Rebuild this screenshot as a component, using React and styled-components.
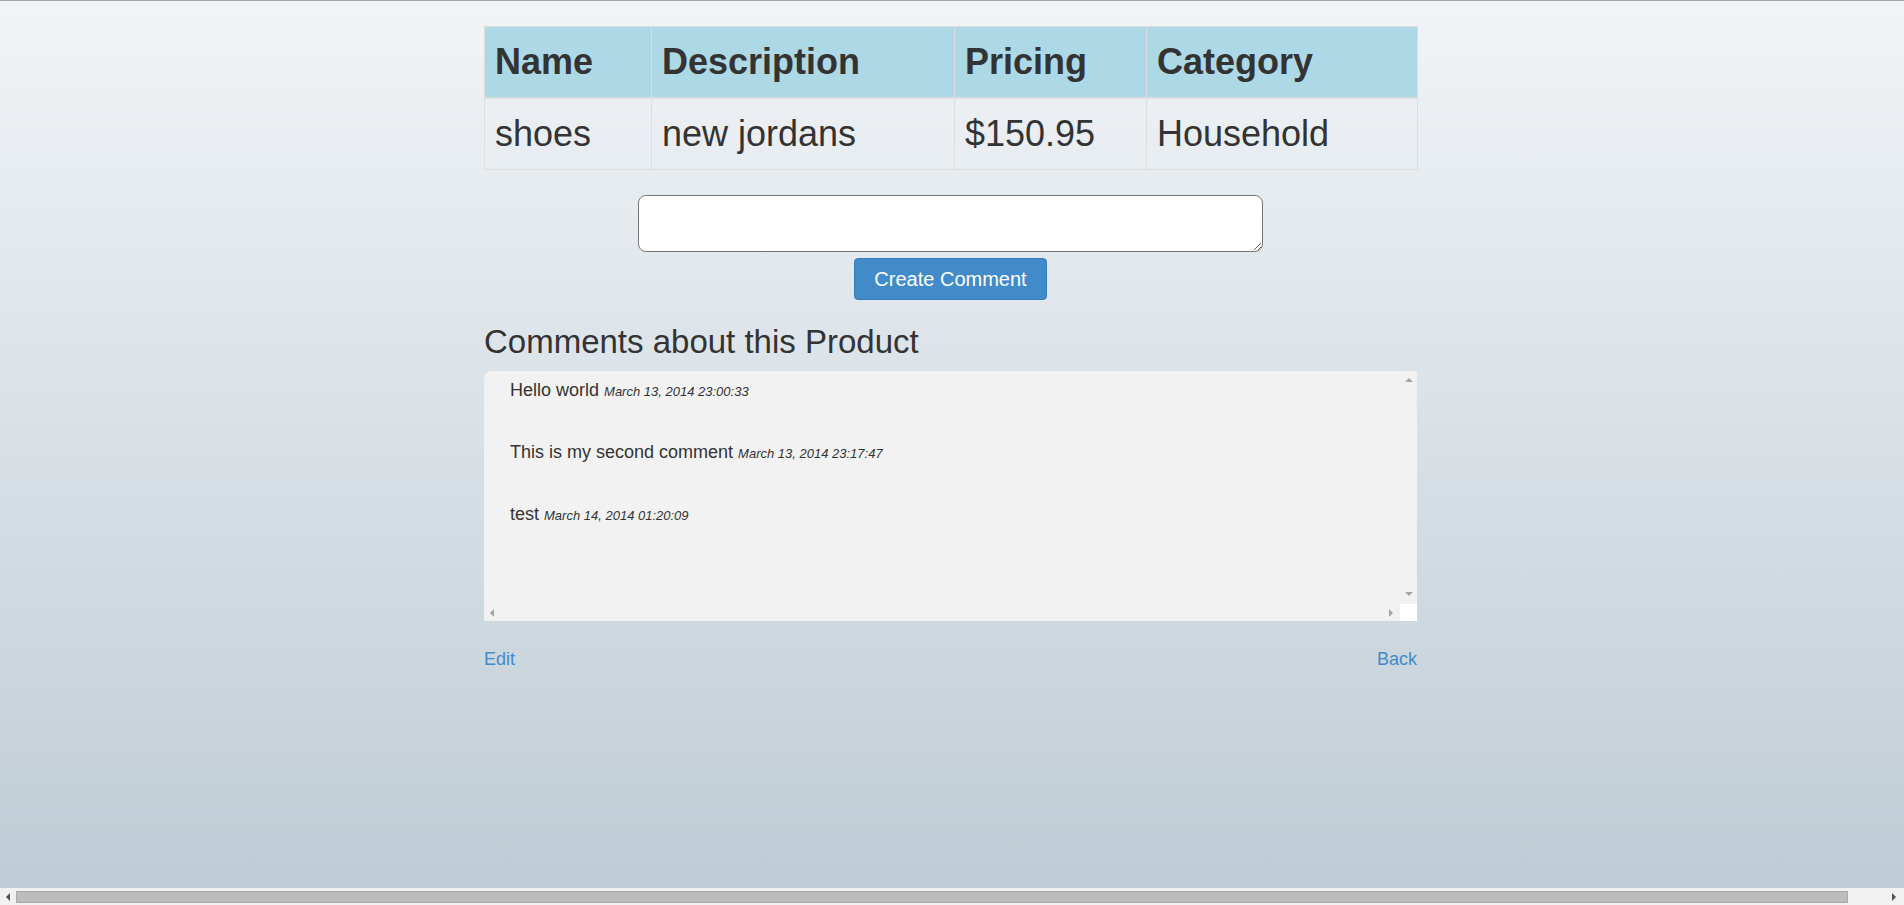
import React from "react";
import styled, { createGlobalStyle, css } from "styled-components";

const GlobalStyle = createGlobalStyle`
  html {
    height: 100%;
    background: linear-gradient(to bottom, #f1f4f7 0px, #bfccd5 888px) no-repeat;
    background-color: #bfccd5;
  }
  body {
    margin: 0;
    border-top: 1px solid #a6a6a6;
    font-family: "Liberation Sans", Arial, sans-serif;
    color: #333;
  }
`;

const Page = styled.div`
  padding-top: 25px;
`;

const Container = styled.div`
  width: 933px;
  margin-left: calc(50vw - 468px);
`;

const ProductTable = styled.table`
  width: 100%;
  table-layout: fixed;
  border-collapse: collapse;
  border: 1px solid #ddd;
  font-size: 36px;
  line-height: 54px;
`;

const HeadCell = styled.th`
  box-sizing: border-box;
  background: #add8e6;
  text-align: left;
  font-weight: bold;
  padding: 8px 8px 8px 10px;
  border: 1px solid #ddd;
  border-bottom-width: 2px;
  width: ${(p) => p.$w}px;
  white-space: nowrap;
`;

const Cell = styled.td`
  padding: 8px 8px 8px 10px;
  border: 1px solid #ddd;
  white-space: nowrap;
`;

const CommentForm = styled.form`
  display: flex;
  flex-direction: column;
  align-items: center;
  gap: 6px;
  margin-top: 25px;
`;

const CommentInput = styled.textarea`
  box-sizing: border-box;
  width: 625px;
  height: 57px;
  border: 1px solid #767676;
  border-radius: 8px;
  background: #fff;
  font-family: "Liberation Sans", Arial, sans-serif;
  font-size: 16px;
`;

const PrimaryButton = styled.button`
  box-sizing: border-box;
  height: 42px;
  padding: 6px 19px;
  background: #428bca;
  border: 1px solid #357ebd;
  border-radius: 4px;
  color: #fff;
  font-family: "Liberation Sans", Arial, sans-serif;
  font-size: 20px;
  line-height: 28px;
`;

const SectionTitle = styled.h2`
  margin: 24px 0 11px;
  font-size: 33px;
  font-weight: normal;
  line-height: 36px;
  color: #333;
`;

const CommentsBox = styled.div`
  height: 250px;
  display: grid;
  grid-template-columns: 1fr 17px;
  grid-template-rows: 1fr 17px;
  background: #f2f2f2;
  border-top-left-radius: 8px;
  overflow: hidden;
`;

const CommentList = styled.ul`
  list-style: none;
  margin: 0;
  padding: 7px 26px 0;
  overflow: hidden;
`;

const CommentItem = styled.li`
  font-size: 18px;
  line-height: 24px;
  margin-bottom: 38px;
  white-space: nowrap;
`;

const CommentDate = styled.em`
  font-size: 13px;
  line-height: 1;
`;

const VScrollbar = styled.div`
  display: flex;
  flex-direction: column;
  justify-content: space-between;
  align-items: center;
  padding: 7px 0 8px;
  background: #f1f1f1;
`;

const HScrollbar = styled.div`
  display: flex;
  justify-content: space-between;
  align-items: center;
  padding: 0 7px 0 6px;
  background: #f1f1f1;
`;

const ScrollCorner = styled.div`
  background: #fff;
`;

const arrowShapes = {
  up: css`
    border-left: 4px solid transparent;
    border-right: 4px solid transparent;
    border-bottom: 4px solid var(--arrow);
  `,
  down: css`
    border-left: 4px solid transparent;
    border-right: 4px solid transparent;
    border-top: 4px solid var(--arrow);
  `,
  left: css`
    border-top: 4px solid transparent;
    border-bottom: 4px solid transparent;
    border-right: 4px solid var(--arrow);
  `,
  right: css`
    border-top: 4px solid transparent;
    border-bottom: 4px solid transparent;
    border-left: 4px solid var(--arrow);
  `,
};

const Arrow = styled.span`
  --arrow: ${(p) => p.$color || "#a3a3a3"};
  display: block;
  width: 0;
  height: 0;
  ${(p) => arrowShapes[p.$dir]}
`;

const Footer = styled.div`
  display: flex;
  justify-content: space-between;
  margin-top: 26px;
`;

const NavLink = styled.a`
  color: #428bca;
  font-size: 18px;
  line-height: 24px;
  text-decoration: none;
`;

const WindowScrollbar = styled.div`
  position: fixed;
  left: 0;
  right: 0;
  bottom: 0;
  height: 17px;
  display: flex;
  align-items: center;
  background: #f1f1f1;
`;

const ScrollButton = styled.div`
  box-sizing: border-box;
  width: ${(p) => p.$w}px;
  height: 17px;
  display: flex;
  align-items: center;
  justify-content: center;
  padding-right: ${(p) => p.$pr || 0}px;
`;

const ScrollThumb = styled.div`
  box-sizing: border-box;
  width: 1832px;
  height: 12px;
  background: #bcbcbc;
  border: 1px solid #a9a9a9;
`;

const ScrollTrack = styled.div`
  flex: 1;
`;

const columns = [
  { label: "Name", w: 167 },
  { label: "Description", w: 303 },
  { label: "Pricing", w: 192 },
  { label: "Category", w: 271 },
];

const comments = [
  { text: "Hello world", date: "March 13, 2014 23:00:33" },
  { text: "This is my second comment", date: "March 13, 2014 23:17:47" },
  { text: "test", date: "March 14, 2014 01:20:09" },
];

export default function App() {
  return (
    <>
      <GlobalStyle />
      <Page>
        <Container>
          <ProductTable>
            <thead>
              <tr>
                {columns.map((c) => (
                  <HeadCell key={c.label} $w={c.w}>
                    {c.label}
                  </HeadCell>
                ))}
              </tr>
            </thead>
            <tbody>
              <tr>
                <Cell>shoes</Cell>
                <Cell>new jordans</Cell>
                <Cell>$150.95</Cell>
                <Cell>Household</Cell>
              </tr>
            </tbody>
          </ProductTable>

          <CommentForm onSubmit={(e) => e.preventDefault()}>
            <CommentInput />
            <PrimaryButton type="submit">Create Comment</PrimaryButton>
          </CommentForm>

          <SectionTitle>Comments about this Product</SectionTitle>
          <CommentsBox>
            <CommentList>
              {comments.map((c) => (
                <CommentItem key={c.date}>
                  {c.text} <CommentDate>{c.date}</CommentDate>
                </CommentItem>
              ))}
            </CommentList>
            <VScrollbar>
              <Arrow $dir="up" />
              <Arrow $dir="down" />
            </VScrollbar>
            <HScrollbar>
              <Arrow $dir="left" />
              <Arrow $dir="right" />
            </HScrollbar>
            <ScrollCorner />
          </CommentsBox>

          <Footer>
            <NavLink href="#">Edit</NavLink>
            <NavLink href="#">Back</NavLink>
          </Footer>
        </Container>
      </Page>

      <WindowScrollbar>
        <ScrollButton $w={16}>
          <Arrow $dir="left" $color="#505050" />
        </ScrollButton>
        <ScrollThumb />
        <ScrollTrack />
        <ScrollButton $w={17} $pr={4}>
          <Arrow $dir="right" $color="#505050" />
        </ScrollButton>
      </WindowScrollbar>
    </>
  );
}
